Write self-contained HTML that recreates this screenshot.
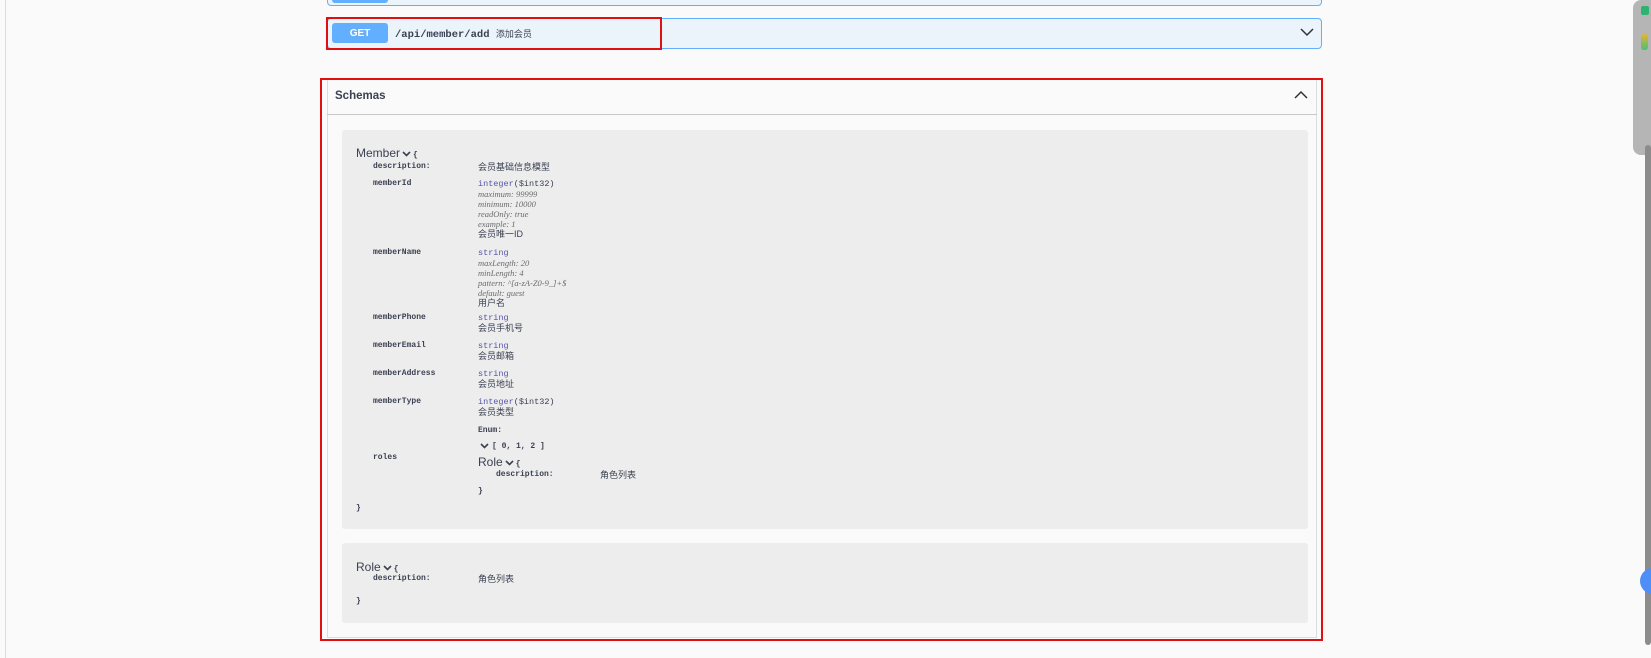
<!DOCTYPE html>
<html><head><meta charset="utf-8"><style>
*{margin:0;padding:0;box-sizing:border-box}
body{width:1651px;height:658px;background:#fafafa;position:relative;overflow:hidden;font-family:"Liberation Sans","Noto Sans CJK SC",sans-serif}
.a{position:absolute;white-space:nowrap}
.m{font-family:"Liberation Mono","Noto Sans CJK SC",monospace;font-size:8px;font-weight:bold;color:#3b4151;line-height:10px}
.i{font-family:"Liberation Serif","Noto Sans CJK SC",serif;font-style:italic;font-size:8.5px;color:#6b6b6b;line-height:10px}
.t{font-family:"Liberation Mono",monospace;font-size:8.5px;color:#55a;line-height:10px}
.cn{font-size:9px;color:#3b4151;line-height:10px}
.h{font-size:12px;color:#3b4151;font-family:"Liberation Sans",sans-serif}
.ch{display:inline-block;vertical-align:middle;margin:0 2px}
</style></head><body>
<div class="a" style="left:5px;top:0;width:1px;height:658px;background:#ddd"></div>
<div class="a" style="left:327px;top:-10px;width:995px;height:16px;background:#ebf3fb;border:1px solid #61affe;border-radius:4px"></div>
<div class="a" style="left:332px;top:-10px;width:56px;height:13px;background:#61affe;border-radius:3px"></div>
<div class="a" style="left:327px;top:18px;width:995px;height:31px;background:#ebf3fb;border:1px solid #61affe;border-radius:4px"></div>
<div class="a" style="left:326px;top:17px;width:336px;height:33px;border:2px solid #e01010"></div>
<div class="a" style="left:332px;top:23px;width:56px;height:20px;background:#61affe;border-radius:3px;color:#fff;font-weight:bold;font-size:10px;display:flex;align-items:center;justify-content:center">GET</div>
<div class="a" style="left:395px;top:27px;font-family:'Liberation Mono',monospace;font-weight:bold;font-size:10.5px;color:#3b4151">/api/member/add <span style="font-family:'Noto Sans CJK SC',sans-serif;font-weight:normal;font-size:9px">添加会员</span></div>
<svg class="a" style="left:1300px;top:27px" width="14" height="10" viewBox="0 0 14 10"><path d="M1 2l6 6 6-6" stroke="#333" stroke-width="1.5" fill="none"/></svg>
<div class="a" style="left:320px;top:78px;width:1003px;height:563px;border:2px solid #e01010"></div>
<div class="a" style="left:327px;top:80px;width:990px;height:558px;border:1px solid #ddd;border-top:none"></div>
<div class="a" style="left:327px;top:114px;width:990px;height:1px;background:#c8c8c8"></div>
<div class="a" style="left:335px;top:90px;font-size:11.5px;font-weight:bold;color:#3b4151">Schemas</div>
<svg class="a" style="left:1294px;top:90px" width="14" height="10" viewBox="0 0 14 10"><path d="M1 8l6-6 6 6" stroke="#333" stroke-width="1.5" fill="none"/></svg>
<div class="a" style="left:342px;top:130px;width:966px;height:399px;background:#ededed;border-radius:3px"></div>
<div class="a" style="left:342px;top:543px;width:966px;height:80px;background:#ededed;border-radius:3px"></div>
<div class="a h" style="left:356px;top:146px">Member<svg class="ch" width="9" height="6" viewBox="0 0 9 6"><path d="M1 1l3.5 3.5L8 1" stroke="#3b4151" stroke-width="1.6" fill="none"/></svg><span class="m">{</span></div>
<div class="a m" style="left:373px;top:162px">description:</div><div class="a cn" style="left:478px;top:162px">会员基础信息模型</div>
<div class="a m" style="left:373px;top:179px">memberId</div>
<div class="a" style="left:478px;top:179px"><div class="t">integer<span style="color:#3b4151">($int32)</span></div><div class="i">maximum: 99999</div><div class="i">minimum: 10000</div><div class="i">readOnly: true</div><div class="i">example: 1</div><div class="cn">会员唯一ID</div></div>
<div class="a m" style="left:373px;top:248px">memberName</div>
<div class="a" style="left:478px;top:248px"><div class="t">string</div><div class="i">maxLength: 20</div><div class="i">minLength: 4</div><div class="i">pattern: ^[a-zA-Z0-9_]+$</div><div class="i">default: guest</div><div class="cn">用户名</div></div>
<div class="a m" style="left:373px;top:313px">memberPhone</div><div class="a" style="left:478px;top:313px"><div class="t">string</div><div class="cn">会员手机号</div></div>
<div class="a m" style="left:373px;top:341px">memberEmail</div><div class="a" style="left:478px;top:341px"><div class="t">string</div><div class="cn">会员邮箱</div></div>
<div class="a m" style="left:373px;top:369px">memberAddress</div><div class="a" style="left:478px;top:369px"><div class="t">string</div><div class="cn">会员地址</div></div>
<div class="a m" style="left:373px;top:397px">memberType</div><div class="a" style="left:478px;top:397px"><div class="t">integer<span style="color:#3b4151">($int32)</span></div><div class="cn">会员类型</div></div>
<div class="a m" style="left:478px;top:426px">Enum:</div>
<div class="a m" style="left:480px;top:442px"><svg class="ch" width="9" height="6" viewBox="0 0 9 6" style="margin:0 3px 0 0"><path d="M1 1l3.5 3.5L8 1" stroke="#3b4151" stroke-width="1.6" fill="none"/></svg>[ 0, 1, 2 ]</div>
<div class="a m" style="left:373px;top:453px">roles</div>
<div class="a h" style="left:478px;top:455px">Role<svg class="ch" width="9" height="6" viewBox="0 0 9 6"><path d="M1 1l3.5 3.5L8 1" stroke="#3b4151" stroke-width="1.6" fill="none"/></svg><span class="m">{</span></div>
<div class="a m" style="left:496px;top:470px">description:</div><div class="a cn" style="left:600px;top:470px">角色列表</div>
<div class="a m" style="left:478px;top:487px">}</div>
<div class="a m" style="left:356px;top:504px">}</div>
<div class="a h" style="left:356px;top:560px">Role<svg class="ch" width="9" height="6" viewBox="0 0 9 6"><path d="M1 1l3.5 3.5L8 1" stroke="#3b4151" stroke-width="1.6" fill="none"/></svg><span class="m">{</span></div>
<div class="a m" style="left:373px;top:574px">description:</div><div class="a cn" style="left:478px;top:574px">角色列表</div>
<div class="a m" style="left:356px;top:597px">}</div>
<div class="a" style="left:1633px;top:0;width:18px;height:155px;background:#b5b5b5;border-radius:8px 0 0 8px"></div>
<div class="a" style="left:1641px;top:6px;width:8px;height:9px;background:#2db36f;border-radius:2px"></div>
<div class="a" style="left:1641px;top:34px;width:7px;height:16px;background:linear-gradient(#e9b52a,#46c07a);border-radius:3px"></div>
<div class="a" style="left:1645px;top:145px;width:6px;height:500px;background:#8c8c8c;border-radius:3px"></div>
<div class="a" style="left:1640px;top:568px;width:14px;height:26px;background:#4d8ef7;border-radius:13px 0 0 13px"></div>
</body></html>
